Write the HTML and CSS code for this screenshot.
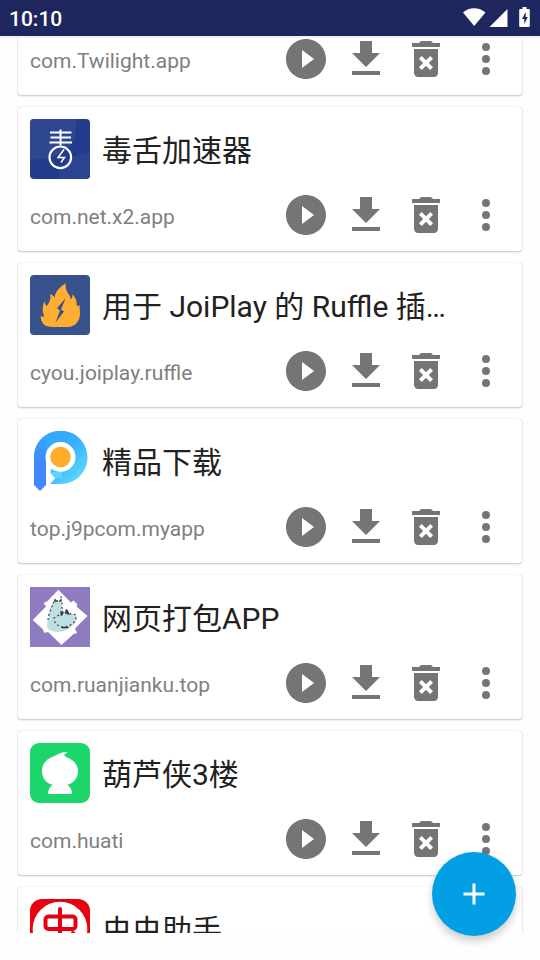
FILE: index.html
```html
<!DOCTYPE html>
<html lang="zh-CN">
<head>
  <meta charset="utf-8">
  <meta name="viewport" content="width=device-width, initial-scale=1">
  <title>Apps</title>
  <link rel="stylesheet" href="styles.css">
</head>
<body>
  <svg class="sprite" aria-hidden="true">
    <symbol id="play" viewBox="0 0 24 24"><path d="M12 2C6.48 2 2 6.48 2 12s4.48 10 10 10 10-4.48 10-10S17.52 2 12 2zm-2 14.5v-9l6 4.5-6 4.5z"/></symbol>
    <symbol id="download" viewBox="0 0 24 24"><path d="M19 9h-4V3H9v6H5l7 7 7-7zM5 18v2h14v-2H5z"/></symbol>
    <symbol id="delete" viewBox="0 0 24 24"><path d="M6 19c0 1.1.9 2 2 2h8c1.1 0 2-.9 2-2V7H6v12zm2.46-7.12l1.41-1.41L12 12.59l2.12-2.12 1.41 1.41L13.41 14l2.12 2.12-1.41 1.41L12 15.41l-2.12 2.12-1.41-1.41L10.59 14l-2.13-2.12zM15.5 4l-1-1h-5l-1 1H5v2h14V4z"/></symbol>
    <symbol id="more" viewBox="0 0 24 24"><circle cx="12" cy="6" r="2"/><circle cx="12" cy="12" r="2"/><circle cx="12" cy="18" r="2"/></symbol>

    <symbol id="app-twilight" viewBox="0 0 60 60"><rect width="60" height="60" rx="4" fill="#5b4a8c"/><circle cx="30" cy="30" r="14" fill="#f3c56b"/></symbol>
    <symbol id="app-x2" viewBox="0 0 60 60">
      <rect width="60" height="60" rx="4" fill="#213b8d"/>
      <path d="M4 0h42c1 14-2 25-10 31C24 40 12 41 0 40V4a4 4 0 0 1 4-4z" fill="#2f4791"/>
      <path d="M29 60c0-14 10-25 31-26v22a4 4 0 0 1-4 4z" fill="#2b4390"/>
      <g fill="none" stroke="#fff">
        <path d="M20 13.500h21.500M20.500 18.500h20.500M19.500 23.500h22.500M30.500 10.500v16" stroke-width="2"/>
        <circle cx="30.300" cy="38.300" r="10.800" stroke-width="2.200"/>
        <path d="M34 30.500l-6 8h6.500l-3.500 5" stroke-width="1.500"/>
      </g>
    </symbol>
    <symbol id="app-ruffle" viewBox="0 0 60 60">
      <rect width="60" height="60" rx="4" fill="#37528c"/>
      <path d="M35.700 8.300c-.5 5 .8 8 3 11 1.400 2 2 3.600 2 5.200 1.400-1.500 1.900-3 1.600-5.300 3 3 4.800 6.500 4.500 11.800 1.300-.1 2-.4 2.900-1.100-.6 3.500.9 6 .2 10.500C49 47.500 44 52 37 52H22c-7 0-11.500-4-11.300-11.300 1.300 1 2.300 1.300 3.600 1-2-5-2.300-10.500.2-15.700.3 2.500 1 4 2.200 5 2.800-3.500 4.700-7.500 3.300-12.300 2 .8 3.600 2 4.500 3.800 1.200-6.500 5.500-10.500 11.200-14.200z" fill="#ffad33"/>
      <path d="M35.500 23.300l-8.500 10 3 2.300-4.500 12 8.500-11-3-2.200z" fill="#37528c"/>
    </symbol>
    <symbol id="app-j9p" viewBox="0 0 60 60">
      <linearGradient id="ring" x1="0" y1="0" x2="1" y2="1"><stop offset=".1" stop-color="#35a4fb"/><stop offset=".5" stop-color="#36b0ff"/><stop offset=".85" stop-color="#5ad5ff"/></linearGradient>
      <linearGradient id="stem" x1="0" y1="0" x2="0" y2="1"><stop offset="0" stop-color="#38a4fc"/><stop offset=".5" stop-color="#4188f8"/></linearGradient>
      <path d="M4 27C4 12 15-.3 30.500-.3S57.500 12 57.500 26.500 46 53 30.500 53H20l5.300-5.700L20 41V27z" fill="url(#ring)"/>
      <path d="M4 27C4 18 8 9 15.500 4.500L16 27v27l-6 6-6-6z" fill="url(#stem)"/>
      <path d="M16 26h5v15h-5z" fill="#fff"/>
      <circle cx="30.500" cy="26" r="15" fill="#fff"/>
      <path d="M20 40.700l12 .3v6h-6.500z" fill="#5ad5ff"/>
      <circle cx="30.500" cy="26" r="10.300" fill="#ffad28"/>
    </symbol>
    <symbol id="app-web" viewBox="0 0 60 60">
      <rect width="60" height="60" fill="#8f7bc0"/>
      <path d="M28.300 2.700L41 15.500l2.500-2 4 4-1 2 11 9.500L45 41.500l2 4.500-3.500 1-12 11L18 45l-3.500 1-2-4L2.700 33 16 19.500 13.500 16l4-2z" fill="#fff"/>
      <path d="M25 13c2 2 4 1 6 3 1 4 1 5 3 8 2 2 5 1 7 3 4 0 6 1 5.500 5-1 5-4 7-7.500 9-6 5-15 5-21 1-2-4 0-9 1-14 1-7 2-10 6-15z" fill="#bfdfe2"/>
      <g fill="none" stroke="#343b42" stroke-linecap="round">
        <path d="M24 15c-2 4-3 7-4.500 11S18 32 18 35M32 16v5c0 4-4 9-8 10M40 27c4-1 7 1 6 4-1 6-8 9-14 9-4-1-6-3-8-6" stroke-width="1.300" stroke-dasharray=".8 3.600"/>
        <path d="M25 14v-3m1 3h5m0 0v-4" stroke-width="1.400" stroke-dasharray="1.500 2"/>
        <path d="M31.500 27.500l1-2m4-2l1.500 3m-2-1h1" stroke-width="2.400"/>
        <path d="M32 40.500h6" stroke-width="1.400"/>
      </g>
    </symbol>
    <symbol id="app-huati" viewBox="0 0 60 60">
      <rect width="60" height="60" rx="9" fill="#1cd66c"/>
      <path d="M37.500 9.200c-1 1-2.500 1.600-3.300 2.500.5 1 1.500 2 2.500 2.600C43 16.500 48 21.500 48 28c0 7-4.500 12-10.500 14C40.500 44 42 47 42 51H18c0-4 1.500-7 4.500-9C16 40 12 35 12 28c0-7.500 5-12.500 11.500-14.500 4.500-1.800 8-5 14-4.300z" fill="#fff"/>
    </symbol>
    <symbol id="app-chong" viewBox="0 0 60 60">
      <rect width="60" height="60" rx="12" fill="#e60012"/>
      <circle cx="30" cy="30" r="27.300" fill="#fff"/>
      <g fill="none" stroke="#e60012" stroke-width="4" stroke-linecap="round">
        <rect x="15.500" y="17.500" width="30" height="12.500" rx="3"/>
        <path d="M30 10v34M16 44h27M43 34l4 8"/>
      </g>
    </symbol>
  </svg>

  <header class="status-bar">
    <span>10:10</span>
    <svg class="status-icons" viewBox="0 0 70 22" fill="#fff" aria-hidden="true">
      <path d="M0 5.500C6-.2 16-.2 22.500 5.500L11.200 19z"/>
      <path d="M44.500 2v18h-18z"/>
      <path fill-rule="evenodd" d="M59.500 0h4v2h2c.8 0 1.300.5 1.300 1.300v15.400c0 .8-.5 1.300-1.300 1.300h-8c-.8 0-1.300-.5-1.300-1.300V3.300c0-.8.5-1.300 1.300-1.300h2zM62.700 5l-3.700 7h2.300v5l3.500-7h-2.100z"/>
    </svg>
  </header>

  <main class="app-list" id="appList"></main>

  <button class="fab" aria-label="Add">
    <svg viewBox="0 0 24 24"><path d="M19 13h-6v6h-2v-6H5v-2h6V5h2v6h6v2z"/></svg>
  </button>

  <script>
    const apps = [
      { name: "", pkg: "com.Twilight.app", icon: "app-twilight" },
      { name: "毒舌加速器", pkg: "com.net.x2.app", icon: "app-x2" },
      { name: "用于 JoiPlay 的 Ruffle 插件", pkg: "cyou.joiplay.ruffle", icon: "app-ruffle" },
      { name: "精品下载", pkg: "top.j9pcom.myapp", icon: "app-j9p" },
      { name: "网页打包APP", pkg: "com.ruanjianku.top", icon: "app-web" },
      { name: "葫芦侠3楼", pkg: "com.huati", icon: "app-huati" },
      { name: "虫虫助手", pkg: "", icon: "app-chong" }
    ];
    const actions = ["play", "download", "delete", "more"];

    const list = document.getElementById("appList");
    list.innerHTML = apps.map(app => `
      <article class="card">
        <div class="card-head">
          <svg class="app-icon"><use href="#${app.icon}"/></svg>
          <h2>${app.name}</h2>
        </div>
        <div class="card-foot">
          <span class="pkg">${app.pkg}</span>
          ${actions.map(a => `<button class="action" aria-label="${a}"><svg><use href="#${a}"/></svg></button>`).join("")}
        </div>
      </article>
    `).join("");

    // open with the first card partly scrolled away
    list.scrollTop = 97;
  </script>
</body>
</html>
```
FILE: styles.css
```css
* {
  box-sizing: border-box;
}

body {
  display: flex;
  flex-direction: column;
  height: 100vh;
  margin: 0;
  padding-bottom: 27px;
  background: #fefefe;
  color: #212121;
  font-family: Roboto, "Noto Sans CJK SC", sans-serif;
}

.sprite {
  position: absolute;
  width: 0;
  height: 0;
}

.status-bar {
  display: flex;
  flex: none;
  align-items: center;
  justify-content: space-between;
  height: 36px;
  padding: 0 7px 0 9px;
  background: #1d265d;
  box-shadow: 0 2px 1px #f1f1f1;
  color: #fff;
  font-size: 21px;
  font-weight: 500;
  z-index: 1;
}

.status-bar span {
  padding-top: 2px;
}

.status-icons {
  width: 70px;
  height: 22px;
}

.app-list {
  display: flex;
  flex: 1;
  flex-direction: column;
  gap: 12px;
  min-height: 0;
  padding: 12px 18px;
  overflow-y: scroll;
  scrollbar-width: none;
}

.card {
  flex: none;
  padding: 12px;
  background: #fff;
  border-radius: 3px;
  box-shadow: 0 0 1px rgba(0, 0, 0, 0.3), 0 1px 2px rgba(0, 0, 0, 0.2);
}

.card-head {
  display: flex;
  align-items: center;
  gap: 12px;
  padding-right: 60px;
}

.app-icon {
  flex: none;
  width: 60px;
  height: 60px;
}

.card h2 {
  margin: 0;
  padding-top: 4px;
  overflow: hidden;
  font-size: 30px;
  font-weight: 400;
  line-height: 44px;
  text-overflow: ellipsis;
  white-space: nowrap;
}

.card-foot {
  display: flex;
  align-items: center;
  gap: 12px;
  margin-top: 12px;
}

.pkg {
  flex: 1;
  padding-top: 4px;
  color: #808080;
  font-size: 21px;
}

.action {
  width: 48px;
  height: 48px;
  padding: 0;
  background: none;
  border: none;
}

.action svg {
  display: block;
  width: 48px;
  height: 48px;
  fill: #757575;
}

.fab {
  position: absolute;
  right: 24px;
  bottom: 24px;
  display: flex;
  align-items: center;
  justify-content: center;
  width: 84px;
  height: 84px;
  padding: 0;
  background: #039fe5;
  border: none;
  border-radius: 50%;
  box-shadow: 0 5px 8px rgba(0, 0, 0, 0.2);
  z-index: 2;
}

.fab svg {
  width: 36px;
  height: 36px;
  fill: #fff;
}
```
